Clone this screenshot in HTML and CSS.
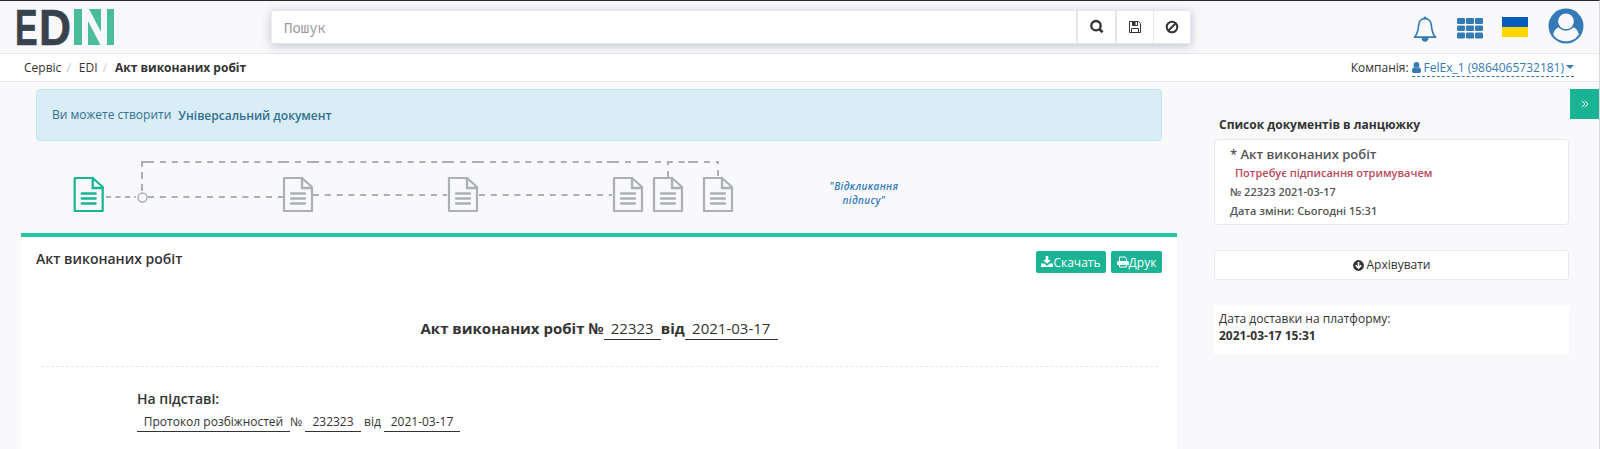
FILE: index.html
```html
<!DOCTYPE html>
<html lang="uk">
<head>
<meta charset="utf-8">
<title>Акт виконаних робіт</title>
<link rel="stylesheet" href="styles.css">
</head>
<body>
<div class="page">
  <header class="topbar">
    <svg class="logo" width="100" height="50" viewBox="0 0 100 50">
      <text class="logo-text" x="-1" y="43.500" textLength="22.600" lengthAdjust="spacingAndGlyphs">E</text>
      <text class="logo-text" x="23" y="43.500" textLength="32" lengthAdjust="spacingAndGlyphs">D</text>
      <g fill="#49be98"><rect x="58" y="8" width="8" height="36"/><rect x="91" y="8" width="7" height="36"/><path d="M73 8h12v23zM72 20l12.500 24H72z"/></g>
    </svg>
    <div class="search">
      <input class="search-input" type="text" placeholder="Пошук">
      <button class="search-btn first"><svg width="16" height="16" viewBox="0 0 16 16" fill="none" stroke="#333"><circle cx="7" cy="6.700" r="4.700" stroke-width="2.300"/><path d="M10.400 10.100l3.200 3.200" stroke-width="2.700"/></svg></button>
      <button class="search-btn second"><svg width="14" height="14" viewBox="0 0 14 14" fill="none" stroke="#333"><path d="M1.500 1.500h9l2 2v9h-11zM3.500 12.500v-4h7v4M4.500 1.500v4h5v-4"/><path d="M4.500 2h2.500v3h-2.500z" fill="#333"/></svg></button>
      <button class="search-btn third"><svg width="14" height="14" viewBox="0 0 14 14" fill="none" stroke="#333" stroke-width="2"><circle cx="7" cy="7" r="5.300"/><path d="M3.500 10.500l7-7"/></svg></button>
    </div>
    <nav class="tools">
      <svg class="bell" width="24" height="27" viewBox="0 0 24 27"><path d="M12 2.500C8 2.500 6 5.500 5.600 9.500 5.200 14.500 4.500 18 1.500 21.200h21C19.500 18 18.800 14.500 18.400 9.500 18 5.500 16 2.500 12 2.500z" fill="none" stroke="#337ab7" stroke-width="1.700" stroke-linejoin="round"/><circle cx="12" cy="2" r="1.500" fill="#337ab7"/><path d="M8.500 22h7c0 5-7 5-7 0z" fill="#337ab7"/></svg>
      <svg class="grid" width="26" height="21" viewBox="0 0 26 21" fill="#337ab7"><rect x="0" y="0" width="8" height="6" rx="1.300"/><rect x="9" y="0" width="8" height="6" rx="1.300"/><rect x="18" y="0" width="8" height="6" rx="1.300"/><rect x="0" y="7.500" width="8" height="5.500" rx="1.300"/><rect x="9" y="7.500" width="8" height="5.500" rx="1.300"/><rect x="18" y="7.500" width="8" height="5.500" rx="1.300"/><rect x="0" y="14.500" width="8" height="6" rx="1.300"/><rect x="9" y="14.500" width="8" height="6" rx="1.300"/><rect x="18" y="14.500" width="8" height="6" rx="1.300"/></svg>
      <span class="flag"></span>
      <svg class="avatar" width="36" height="36" viewBox="0 0 36 36"><circle cx="18" cy="18" r="17.500" fill="#337ab7"/><path d="M12.200 19C8.500 19.500 5.800 22.500 5.300 26.500 8 31 12.500 33.300 18 33.300s10-2.300 12.700-6.800C30.200 22.500 27.500 19.500 23.800 19z" fill="#f9f9fb"/><circle cx="18" cy="13.300" r="8.700" fill="#f9f9fb" stroke="#337ab7" stroke-width="1.600"/></svg>
    </nav>
  </header>

  <div class="crumbs">
    <div class="trail"><span>Сервіс</span><i class="sep">/</i><span>EDI</span><i class="sep">/</i><b>Акт виконаних робіт</b></div>
    <div class="company"><span>Компанія:</span><a class="company-link"><svg width="9" height="11" viewBox="0 0 9 11" fill="#337ab7"><circle cx="4.500" cy="2.900" r="2.900"/><path d="M2 5.200C.5 5.500 0 7 0 9c0 1.200.6 2 1.700 2h5.600C8.400 11 9 10.200 9 9c0-2-.5-3.500-2-3.800-1.500 1.300-3.500 1.300-5 0z"/></svg><span class="company-name">FelEx_1 (9864065732181)</span><i class="caret"></i></a></div>
  </div>

  <div class="content">
    <main class="main">
      <div class="alert"><span>Ви можете створити</span><b>Універсальний документ</b></div>
      <div class="chain">
        <svg width="700" height="70" viewBox="0 0 700 70">
          <defs>
            <g id="doc" fill="none"><path d="M1 1h18l10 9v24H1z" stroke-width="2.200" stroke-linejoin="round"/><path d="M19 1v10h10M8 16.500h14M8 21.500h14M8 26.500h14" stroke-width="2.300" stroke-linecap="round"/></g>
          </defs>
          <g stroke="#abb0b3" stroke-width="2" fill="none">
            <path d="M70 35H100" stroke-dasharray="5 4.500"/>
            <path d="M112 35H247" stroke-dasharray="6 5.800"/>
            <path d="M106 29V0H111" stroke-dasharray="7 5"/>
            <path d="M112 0H118M124 0H243M289 0H406M454 0H571M619 0H652M668 0H682" stroke-dasharray="6 5.800"/>
            <path d="M106 0H118M242 0H253M259 0H265M271 0H283M406 0H418M424 0H430M436 0H448M571 0H583M589 0H595M601 0H612M652 0H662"/>
            <path d="M277 33H411M443 33H576" stroke-dasharray="6 5.800"/>
            <path d="M632 0v15M682 -1v15" stroke-dasharray="3 6 6"/>
            <circle cx="106.500" cy="35.500" r="4.500" stroke-width="1.400"/>
            <use href="#doc" x="247" y="15"/><use href="#doc" x="412" y="15"/><use href="#doc" x="577" y="15"/><use href="#doc" x="617" y="15"/><use href="#doc" x="667" y="15"/>
          </g>
          <use href="#doc" x="37.700" y="15" stroke="#1ab394"/>
        </svg>
        <p class="recall">"Відкликання<br>підпису"</p>
      </div>
      <section class="document">
        <div class="doc-head">
          <h5 class="doc-title">Акт виконаних робіт</h5>
          <div class="actions">
            <button class="btn download"><svg width="12" height="12" viewBox="0 0 12 12" fill="#fff"><path d="M4.700 0h2.600v4h2.500L6 7.800 2.200 4h2.500zM0 7.500h3.300L6 10l2.700-2.500H12V11H0z"/></svg><span>Скачать</span></button>
            <button class="btn print"><svg width="12" height="12" viewBox="0 0 12 12"><path d="M2.500 6V1h5.500l1.500 1.500V6M2.500 8v3h7V8" fill="none" stroke="#fff" stroke-width="1"/><path d="M0 6.500Q0 5 1.500 5h9Q12 5 12 6.500V9H0z" fill="#fff"/></svg><span>Друк</span></button>
          </div>
        </div>
        <div class="act-line"><b>Акт виконаних робіт №</b><span class="field number">22323</span><b>від</b><span class="field date">2021-03-17</span></div>
        <hr class="divider">
        <div class="basis">
          <h4 class="basis-title">На підставі:</h4>
          <div class="basis-line"><span class="field protocol">Протокол розбіжностей</span><span class="no">№</span><span class="field basis-no">232323</span><span class="from">від</span><span class="field basis-date">2021-03-17</span></div>
        </div>
      </section>
    </main>
    <aside class="side">
      <h5 class="side-title">Список документів в ланцюжку</h5>
      <div class="card">
        <div class="card-name">* Акт виконаних робіт</div>
        <div class="card-status">Потребує підписання отримувачем</div>
        <div class="card-row">№ 22323 2021-03-17</div>
        <div class="card-row">Дата зміни: Сьогодні 15:31</div>
      </div>
      <button class="archive"><svg width="11" height="11" viewBox="0 0 11 11"><circle cx="5.500" cy="5.500" r="5.400" fill="#333"/><path d="M5.500 2v6M2.700 5.300l2.800 2.800 2.800-2.800" stroke="#fff" stroke-width="1.600" fill="none"/></svg><span>Архівувати</span></button>
      <div class="delivery"><span>Дата доставки на платформу:</span><b>2021-03-17 15:31</b></div>
    </aside>
    <div class="toggle"><svg width="8" height="8" viewBox="0 0 8 8" fill="none" stroke="#fff"><path d="M1 .8L4 4 1 7.200M4 .8L7 4 4 7.200"/></svg></div>
  </div>
</div>
</body>
</html>
```
FILE: styles.css
```css
* { box-sizing: border-box; }
body {
  margin: 0;
  background: #f9f9fb;
  color: #333;
  font: 12px/18px "Open Sans", "Noto Sans", sans-serif;
  overflow: hidden;
}
h4, h5, p { margin: 0; }
b { font-weight: 700; }
svg { display: block; flex: none; }
button { font: inherit; color: inherit; padding: 0; margin: 0; }
.page { height: 449px; border-top: 1px solid #2b2730; border-right: 1px solid #d9d9dd; overflow: hidden; }

.topbar { display: flex; height: 53px; border-bottom: 1px solid #e7e7ec; }
.logo { margin-left: 16px; overflow: visible; }
.logo-text { font: 700 50px "Liberation Sans", Arial, sans-serif; fill: #38424d; stroke: #38424d; stroke-width: .6px; }
.search {
  display: flex;
  width: 920px;
  height: 34px;
  margin: 9px 0 0 155px;
  border: 1px solid #e5e6e7;
  border-left-color: #eee;
  background: #fff;
  box-shadow: 0 2px 9px rgba(60, 70, 120, .3);
}
.search-input { flex: 1; min-width: 0; border: 0; padding: 0 0 0 12px; font: 14px "Noto Sans Mono", "DejaVu Sans Mono", monospace; outline: 0; background: #fff; }
.search-input::placeholder { color: #999; opacity: 1; }
.search-btn { display: flex; align-items: center; justify-content: center; border: 0; border-left: 2px solid #e5e6e7; background: #fff; }
.first { width: 39px; }
.second { width: 38px; }
.third { width: 37px; border-left-width: 1px; }
.tools { display: flex; margin-left: auto; }
.bell { margin: 15px 20px 0 0; }
.grid { margin: 17px 19px 0 0; }
.flag { width: 26px; height: 20px; margin: 16px 20px 0 0; background: linear-gradient(#005bbb 50%, #ffd500 50%); }
.avatar { margin: 7px 15px 0 0; }

.crumbs { display: flex; justify-content: space-between; height: 28px; padding: 0 25px 0 24px; background: #fff; border-bottom: 1px solid #e7e7ec; }
.trail { display: flex; padding-top: 5px; }
.sep { font-style: normal; color: #ccc; width: 5px; }
.trail .sep { margin: 0 7.200px 0 5.300px; }
.company { display: flex; padding-top: 4px; gap: 3px; line-height: 19px; }
.company-link { display: flex; align-items: center; height: 19px; color: #337ab7; border-bottom: 1px dashed #337ab7; }
.company-name { margin: 0 2px 0 3px; }
.caret { border: 4px solid transparent; border-top-color: #337ab7; border-bottom: 0; }

.content { display: flex; align-items: flex-start; padding-top: 7px; }
.main { width: 1156px; margin-left: 21px; flex: none; }
.alert {
  display: flex;
  align-items: center;
  gap: 7px;
  height: 52px;
  margin: 0 15px;
  padding-left: 15px;
  background: #d9edf7;
  border: 1px solid #bce8f1;
  border-radius: 4px;
  color: #31708f;
}
.alert span { padding-bottom: 1px; }
.alert b { font-weight: 600; padding-top: 1px; }
.chain { display: flex; height: 92px; padding: 21px 0 0 15px; }
.chain svg { overflow: visible; }
.recall { width: 80px; margin: 17px 0 0 88px; text-align: center; font: italic 600 10px/14px "Open Sans", sans-serif; letter-spacing: .35px; color: #337ab7; }
.document { height: 230px; background: #fff; border-top: 4px solid #23c6a4; }
.doc-head { display: flex; justify-content: space-between; padding: 14px 15px 0; }
.doc-title { font-size: 14px; line-height: 16px; font-weight: 600; }
.actions { display: flex; gap: 5px; }
.btn { display: flex; align-items: center; justify-content: center; height: 22px; background: #1ab394; border: 0; border-radius: 2px; color: #fff; }
.btn span { padding-top: 1px; }
.download { width: 70px; }
.print { width: 51px; }
.act-line { display: flex; margin: 44px 0 0 399.500px; font-size: 15px; line-height: 22px; }
.field { border-bottom: 1px solid #333; white-space: nowrap; text-align: center; }
.number { width: 57px; }
.date { width: 93px; }
.divider { margin: 26px 19px 0 20px; border: 0; border-top: 1px dashed #e7eaec; }
.basis { padding: 22px 0 0 116px; }
.basis-title { font-size: 14px; line-height: 20px; font-weight: 600; }
.basis-line { display: flex; padding-top: 3px; line-height: 19px; }
.protocol { width: 153px; }
.no { width: 15px; }
.basis-no { width: 56px; }
.from { width: 23px; text-align: center; }
.basis-date { width: 76px; }

.side { width: 355px; margin-left: 37px; flex: none; padding-top: 27px; }
.side-title { padding-left: 5px; font-size: 12px; line-height: 18px; font-weight: 700; }
.card { height: 86px; margin-top: 5px; padding: 5px 15px 0; background: #fff; border: 1px solid #e7eaec; border-radius: 4px; color: #555; font-weight: 600; font-size: 11px; line-height: 19px; }
.card-name { font-size: 13px; height: 18px; }
.card-status { padding-left: 5px; color: #b9485a; }
.archive { display: flex; align-items: center; justify-content: center; gap: 3px; width: 100%; height: 30px; margin-top: 25px; background: #fff; border: 1px solid #e7eaec; border-radius: 3px; }
.delivery { height: 49px; margin-top: 25px; padding: 5px 5px 0; background: #fff; line-height: 17px; }
.delivery span, .delivery b { display: block; }
.toggle { display: flex; align-items: center; justify-content: center; width: 29px; height: 30px; margin-left: 1px; background: #1ab394; }
```
